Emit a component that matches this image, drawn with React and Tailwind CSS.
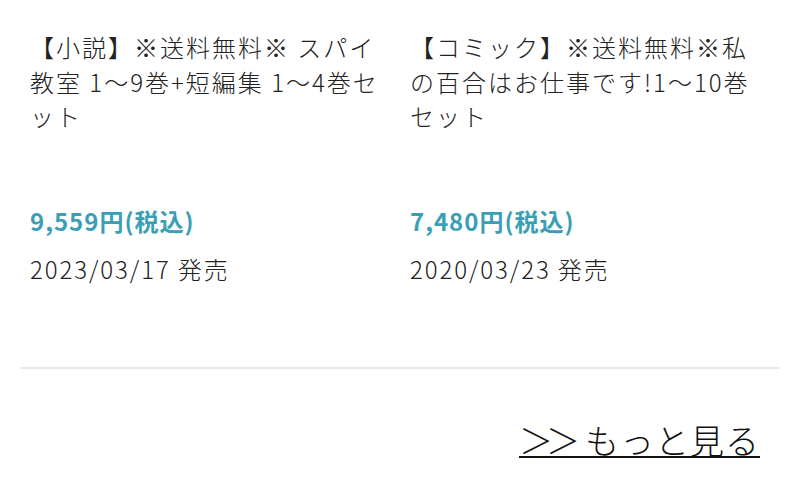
export default function App() {
  const items = [
    {
      title: "【小説】※送料無料※ スパイ教室 1〜9巻+短編集 1〜4巻セット",
      price: "9,559円(税込)",
      date: "2023/03/17 発売",
    },
    {
      title: "【コミック】※送料無料※私の百合はお仕事です!1〜10巻セット",
      price: "7,480円(税込)",
      date: "2020/03/23 発売",
    },
  ];
  return (
    <div
      className="w-[800px] h-[500px] bg-white text-[#222] overflow-hidden"
      style={{ fontFamily: '"Noto Sans CJK JP", "Noto Sans", sans-serif' }}
    >
      <div className="px-[20px] pt-[30px]">
        <div className="grid grid-cols-2">
          {items.map((it, i) => (
            <div key={i} className="px-[10px]">
              <div className="text-[24px] leading-[34.5px] tracking-[2px] font-light h-[174px]">{it.title}</div>
              <div className="text-[24px] leading-[34px] tracking-[1px] font-bold text-[#3a9fb5]">{it.price}</div>
              <div className="mt-[14px] text-[24px] leading-[34px] tracking-[1.9px] font-light">{it.date}</div>
            </div>
          ))}
        </div>
        <div className="mt-[81px] h-[2px] bg-[#e8e8e8]"></div>
        <div className="flex justify-end pr-[20px] pt-[49px]">
          <a className="text-[34px] leading-[44px] tracking-[1px] font-light underline underline-offset-[2px] decoration-[2px] text-[#111]" href="#">
            <span className="tracking-[-7px]">＞</span><span className="tracking-[5px]">＞</span>もっと見る
          </a>
        </div>
      </div>
    </div>
  );
}
